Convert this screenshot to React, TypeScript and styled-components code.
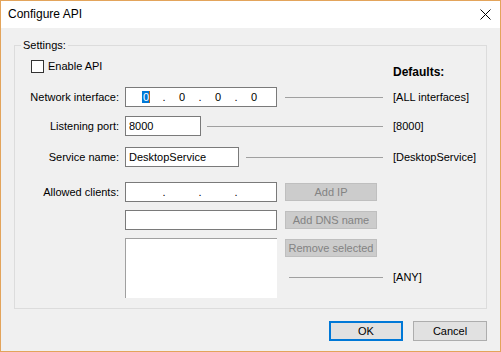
import React from 'react';
import styled, { createGlobalStyle } from 'styled-components';

const GlobalStyle = createGlobalStyle`
  html, body {
    margin: 0;
    padding: 0;
    background: #ffffff;
  }
  body {
    font-family: "Liberation Sans", Arial, sans-serif;
    font-size: 11px;
    color: #000000;
  }
`;

const Window = styled.div`
  display: flex;
  flex-direction: column;
  box-sizing: border-box;
  width: 501px;
  height: 352px;
  border: 1px solid #e3a45b;
  background: #f0f0f0;
`;

const TitleBar = styled.div`
  display: flex;
  align-items: center;
  justify-content: space-between;
  height: 27px;
  padding: 0 9px 0 7px;
  background: #ffffff;
`;

const Title = styled.span`
  font-size: 12px;
  line-height: 15px;
`;

const Body = styled.div`
  display: flex;
  flex-direction: column;
  flex: 1;
  padding: 11px 13px 0;
`;

const GroupBox = styled.fieldset`
  margin: 0;
  padding: 0 0 10px;
  min-width: 0;
  border: 1px solid #dcdcdc;
`;

const Legend = styled.legend`
  margin-left: 6px;
  padding: 0 2px;
  line-height: 13px;
`;

const HeaderRow = styled.div`
  display: flex;
  align-items: flex-start;
  margin-top: 8px;
  padding-left: 16px;
`;

const CheckLabel = styled.label`
  display: flex;
  align-items: center;
  flex: 1;
  gap: 4px;
  line-height: 13px;
`;

const CheckBox = styled.span`
  box-sizing: border-box;
  width: 13px;
  height: 13px;
  border: 1px solid #333333;
  background: #ffffff;
`;

const DefaultsHeader = styled.span`
  width: 93px;
  margin-top: 6px;
  font-size: 12px;
  font-weight: bold;
  line-height: 13px;
`;

const FieldRow = styled.div<{ $top: number }>`
  display: flex;
  align-items: center;
  height: 20px;
  margin-top: ${(p) => p.$top}px;
`;

const FieldLabel = styled.span`
  width: 104px;
  margin-right: 6px;
  text-align: right;
  line-height: 20px;
`;

const TextBox = styled.div<{ $width: number }>`
  box-sizing: border-box;
  display: flex;
  align-items: center;
  width: ${(p) => p.$width}px;
  height: 20px;
  padding-left: 3px;
  border: 1px solid #7a7a7a;
  background: #ffffff;
  white-space: nowrap;
`;

const IpBox = styled(TextBox)`
  padding-left: 5px;
`;

const Octet = styled.span`
  width: 30px;
  text-align: center;
`;

const Selected = styled.span`
  padding: 0 0 0 1px;
  background: #0078d7;
  color: #ffffff;
  border-right: 1px solid #b0651c;
`;

const Dot = styled.span`
  width: 6px;
  text-align: center;
`;

const Leader = styled.span<{ $gap?: number }>`
  flex: 1;
  height: 1px;
  margin: 0 10px 0 ${(p) => p.$gap ?? 7}px;
  background: #a0a0a0;
`;

const DefaultValue = styled.span`
  width: 93px;
  line-height: 13px;
  white-space: nowrap;
`;

const AllowedSection = styled.div`
  display: flex;
  align-items: flex-start;
  margin-top: 15px;
`;

const ControlColumn = styled.div`
  display: flex;
  flex-direction: column;
  gap: 8px;
  width: 152px;
`;

const ListBox = styled.div`
  box-sizing: border-box;
  height: 60px;
  border-top: 1px solid #a0a0a0;
  border-left: 1px solid #a0a0a0;
  background: #ffffff;
`;

const ActionColumn = styled.div`
  display: flex;
  flex-direction: column;
  flex: 1;
  gap: 10px;
  margin: 1px 0 0 8px;
`;

const DisabledButton = styled.button`
  box-sizing: border-box;
  width: 92px;
  height: 18px;
  padding: 0;
  border: 1px solid #bfbfbf;
  background: #cccccc;
  color: #838383;
  font-family: inherit;
  font-size: 11px;
  line-height: 16px;
  white-space: nowrap;
`;

const AnyRow = styled.div`
  display: flex;
  align-items: center;
  height: 13px;
  margin-top: 4px;
`;

const Footer = styled.div`
  display: flex;
  justify-content: flex-end;
  gap: 10px;
  margin-top: 12px;
`;

const DialogButton = styled.button<{ $default?: boolean }>`
  box-sizing: border-box;
  width: 74px;
  height: 20px;
  padding: 0;
  border: ${(p) => (p.$default ? '2px solid #0078d7' : '1px solid #adadad')};
  background: #e1e1e1;
  color: #000000;
  font-family: inherit;
  font-size: 11px;
`;

function CloseIcon(): JSX.Element {
  return (
    <svg width="11" height="11" viewBox="0 0 11 11">
      <path d="M0.5 0.5L10.5 10.5M10.5 0.5L0.5 10.5" stroke="#000000" strokeWidth="1" />
    </svg>
  );
}

function IpAddress({ values, selectFirst }: { values: string[]; selectFirst?: boolean }): JSX.Element {
  return (
    <IpBox $width={152}>
      {values.map((v, i) => (
        <React.Fragment key={i}>
          <Octet>{i === 0 && selectFirst ? <Selected>{v}</Selected> : v}</Octet>
          {i < 3 && <Dot>.</Dot>}
        </React.Fragment>
      ))}
    </IpBox>
  );
}

export default function App(): JSX.Element {
  return (
    <>
      <GlobalStyle />
      <Window>
        <TitleBar>
          <Title>Configure API</Title>
          <CloseIcon />
        </TitleBar>
        <Body>
          <GroupBox>
            <Legend>Settings:</Legend>
            <HeaderRow>
              <CheckLabel>
                <CheckBox />
                Enable API
              </CheckLabel>
              <DefaultsHeader>Defaults:</DefaultsHeader>
            </HeaderRow>

            <FieldRow $top={8}>
              <FieldLabel>Network interface:</FieldLabel>
              <IpAddress values={['0', '0', '0', '0']} selectFirst />
              <Leader $gap={8} />
              <DefaultValue>[ALL interfaces]</DefaultValue>
            </FieldRow>

            <FieldRow $top={9}>
              <FieldLabel>Listening port:</FieldLabel>
              <TextBox $width={76}>8000</TextBox>
              <Leader $gap={6} />
              <DefaultValue>[8000]</DefaultValue>
            </FieldRow>

            <FieldRow $top={11}>
              <FieldLabel>Service name:</FieldLabel>
              <TextBox $width={114}>DesktopService</TextBox>
              <Leader />
              <DefaultValue>[DesktopService]</DefaultValue>
            </FieldRow>

            <AllowedSection>
              <FieldLabel>Allowed clients:</FieldLabel>
              <ControlColumn>
                <IpAddress values={['', '', '', '']} />
                <TextBox $width={152} />
                <ListBox />
              </ControlColumn>
              <ActionColumn>
                <DisabledButton disabled>Add IP</DisabledButton>
                <DisabledButton disabled>Add DNS name</DisabledButton>
                <DisabledButton disabled>Remove selected</DisabledButton>
                <AnyRow>
                  <Leader $gap={4} />
                  <DefaultValue>[ANY]</DefaultValue>
                </AnyRow>
              </ActionColumn>
            </AllowedSection>
          </GroupBox>
          <Footer>
            <DialogButton $default>OK</DialogButton>
            <DialogButton>Cancel</DialogButton>
          </Footer>
        </Body>
      </Window>
    </>
  );
}
